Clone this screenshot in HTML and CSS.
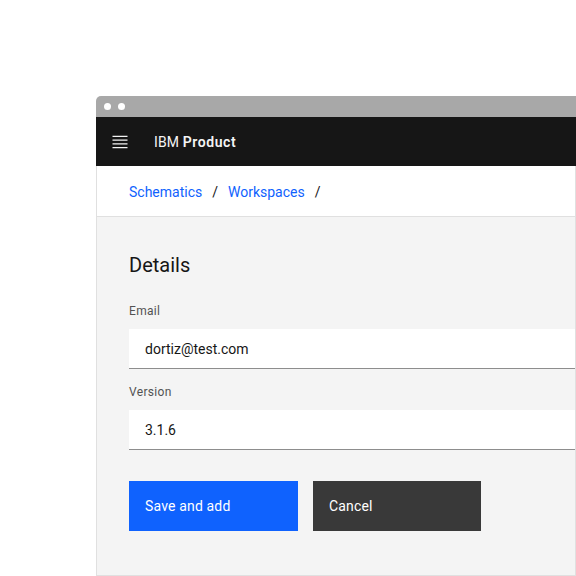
FILE: index.html
```html
<!DOCTYPE html>
<html lang="en">
<head>
<meta charset="utf-8">
<title>IBM Product</title>
<link rel="stylesheet" href="styles.css">
</head>
<body>
<div class="stage">
  <div class="window">
    <div class="titlebar">
      <span class="dot"></span>
      <span class="dot"></span>
    </div>
    <header class="header">
      <span class="menu-btn" aria-label="Menu">
        <svg width="20" height="20" viewBox="0 0 32 32" fill="#f4f4f4" aria-hidden="true">
          <path d="M4 6h24v2H4zm0 18h24v2H4zm0-6h24v2H4zm0-6h24v2H4z"/>
        </svg>
      </span>
      <span class="product"><span class="ibm">IBM</span> <span class="prod">Product</span></span>
    </header>
    <div class="body">
      <nav class="breadcrumb">
        <span class="crumb">Schematics</span><span class="sep">/</span><span class="crumb">Workspaces</span><span class="sep">/</span>
      </nav>
      <main class="main">
        <h2 class="title">Details</h2>
        <div class="field">
          <div class="label">Email</div>
          <div class="input">dortiz@test.com</div>
        </div>
        <div class="field">
          <div class="label">Version</div>
          <div class="input">3.1.6</div>
        </div>
        <div class="buttons">
          <span class="btn btn-primary">Save and add</span>
          <span class="btn btn-secondary">Cancel</span>
        </div>
      </main>
    </div>
  </div>
</div>
</body>
</html>
```

FILE: styles.css
```css
* { box-sizing: border-box; }

html, body {
  margin: 0;
  padding: 0;
  background: #ffffff;
  font-family: Roboto, "Liberation Sans", sans-serif;
  color: #161616;
}

.stage {
  width: 576px;
  height: 576px;
  padding: 96px 0 0 96px;
  overflow: hidden;
}

.window {
  width: 480px;
  height: 480px;
  display: flex;
  flex-direction: column;
}

.titlebar {
  height: 21px;
  flex: none;
  background: #a8a8a8;
  border-top-left-radius: 5px;
  display: flex;
  align-items: center;
  gap: 7px;
  padding-left: 7.5px;
}

.dot {
  width: 7px;
  height: 7px;
  border-radius: 50%;
  background: #ffffff;
}

.header {
  height: 49px;
  flex: none;
  background: #161616;
  display: flex;
  align-items: center;
  padding-left: 14px;
}

.menu-btn {
  display: flex;
  width: 20px;
  height: 20px;
  margin-right: 24px;
}

.product {
  font-size: 14px;
  line-height: 20px;
  color: #f4f4f4;
  letter-spacing: 0.1px;
}

.prod {
  font-weight: 600;
  letter-spacing: 0.6px;
}

.body {
  flex: 1;
  display: flex;
  flex-direction: column;
  border-left: 1px solid #e0e0e0;
  border-right: 1px solid #e0e0e0;
  border-bottom: 1px solid #e0e0e0;
}

.breadcrumb {
  height: 51px;
  flex: none;
  background: #ffffff;
  border-bottom: 1px solid #e0e0e0;
  padding: 16px 0 0 32px;
  font-size: 14px;
  line-height: 20px;
}

.crumb { color: #0f62fe; }

.sep {
  color: #161616;
  margin: 0 10px;
}

.main {
  flex: 1;
  background: #f4f4f4;
  padding: 34px 0 0 32px;
}

.title {
  margin: 0 0 24px;
  font-size: 20px;
  line-height: 28px;
  font-weight: 400;
  color: #161616;
}

.field { margin-bottom: 15px; }

.label {
  font-size: 12px;
  line-height: 16px;
  letter-spacing: 0.32px;
  color: #525252;
  margin-bottom: 10px;
}

.input {
  height: 40px;
  background: #ffffff;
  border-bottom: 1px solid #8d8d8d;
  padding: 0 16px;
  display: flex;
  align-items: center;
  font-size: 14px;
  color: #161616;
}

.buttons {
  display: flex;
  gap: 15px;
  margin-top: 31px;
}

.btn {
  height: 50px;
  display: flex;
  align-items: center;
  padding-left: 16px;
  font-size: 14px;
  color: #ffffff;
  letter-spacing: 0.16px;
}

.btn-primary {
  width: 169px;
  background: #0f62fe;
}

.btn-secondary {
  width: 168px;
  background: #393939;
}
```
